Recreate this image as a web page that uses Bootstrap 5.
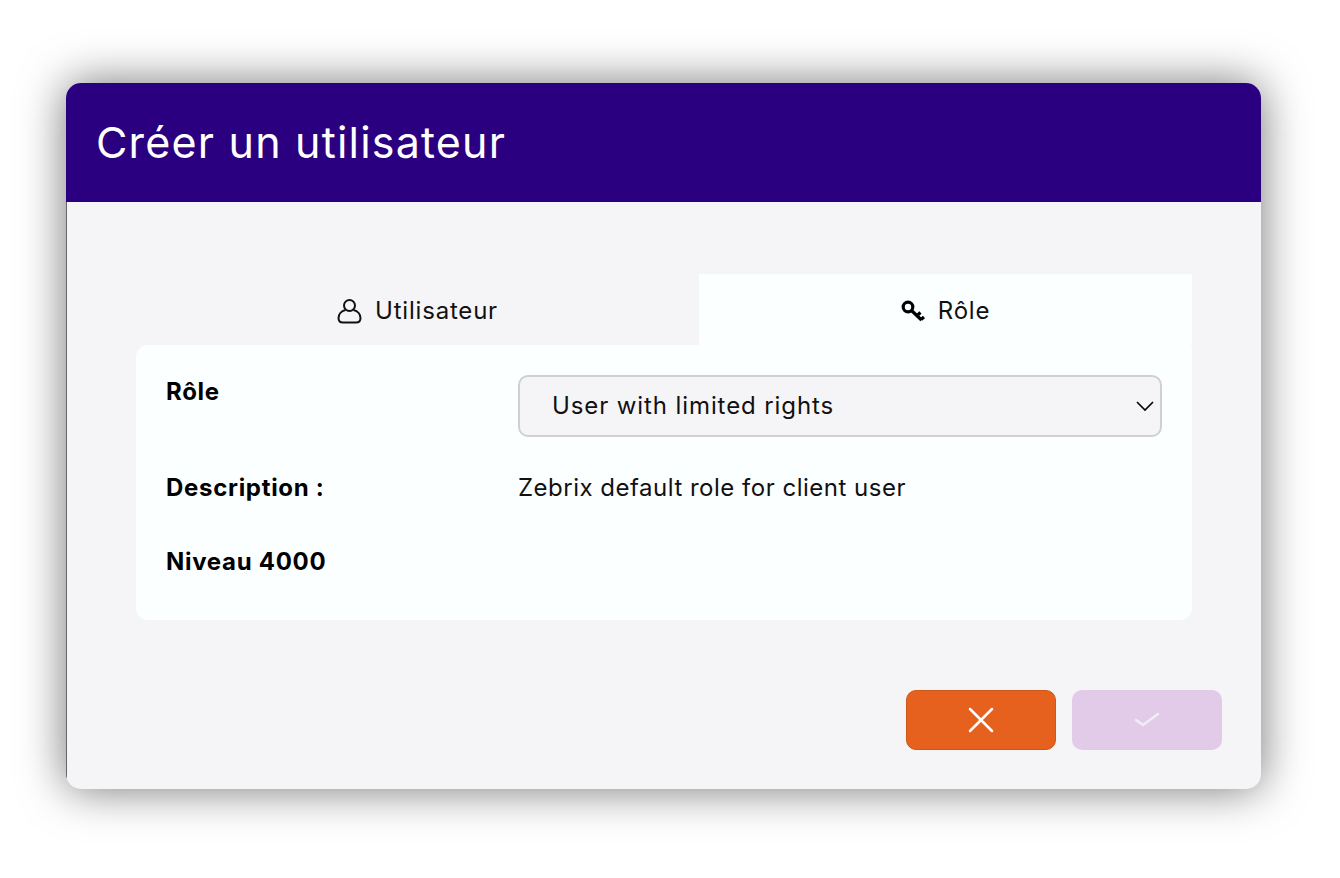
<!DOCTYPE html>
<html lang="fr">
<head>
  <meta charset="UTF-8" />
  <meta name="viewport" content="width=device-width, initial-scale=1" />
  <title>Créer un utilisateur</title>
  <link href="https://cdn.jsdelivr.net/npm/bootstrap@5.3.3/dist/css/bootstrap.min.css" rel="stylesheet" />
  <style>
    body {
      background: #fff;
      font-family: Inter, "Liberation Sans", sans-serif;
      color: #111;
    }
    .page-wrap {
      padding: 83px 79px 89px 66px;
    }
    .dialog-box {
      height: 706px;
      background: #f5f5f8;
      border: 0;
      border-radius: 15px;
      box-shadow: 0 0 46px rgba(0, 0, 0, .55);
      overflow: hidden;
    }
    .dialog-head {
      height: 119px;
      background: #2b0080;
      color: #fff;
      padding: 0 30px;
      font-size: 43px;
      font-weight: 400;
      letter-spacing: 1.2px;
    }
    .dialog-body {
      padding: 72px 69px 28px 69px;
      border-left: 1px solid #666;
    }
    .tab-item {
      height: 71px;
      padding-top: 3px;
      font-size: 24px;
      gap: 13px;
      letter-spacing: .8px;
      color: #111;
    }
    .tab-user { width: 563px; }
    .tab-role { width: 493px; background: #fbffff; }
    .role-panel {
      background: #fbffff;
      border-radius: 12px 3px 12px 12px;
      padding: 30px 30px 42px;
      font-size: 24px;
      line-height: 33px;
    }
    .label-col { width: 352px; font-weight: 700; color: #000; letter-spacing: .7px; }
    .value-col { width: 644px; letter-spacing: .5px; }
    .role-select {
      height: 62px;
      padding: 0 40px 0 32px;
      background-color: #f5f5f8;
      background-image: url("data:image/svg+xml,%3csvg xmlns='http://www.w3.org/2000/svg' viewBox='0 0 18 11'%3e%3cpath fill='none' stroke='%23000' stroke-width='1.6' d='M1 1l8 8 8-8'/%3e%3c/svg%3e");
      background-position: right 6px center;
      background-size: 18px 11px;
      border: 2px solid #d0d0d0;
      border-radius: 10px;
      font-size: 24px;
      letter-spacing: .9px;
      color: #111;
    }
    .desc-row { margin-top: 34px; }
    .level-row { margin-top: 41px; }
    .dialog-foot { padding-top: 70px; margin-right: -30px; gap: 16px; }
    .act-btn {
      width: 150px;
      height: 60px;
      border-radius: 10px;
      padding: 0;
    }
    .btn-cancel { background: #e6611e; border: 1px solid #cf5719; }
    .btn-cancel:hover { background: #d9571a; border-color: #cf5719; }
    .btn-save, .btn-save:disabled { background: #e2cbe8; border: 0; opacity: 1; }
  </style>
</head>
<body>

<div class="page-wrap">
  <div class="card dialog-box">
    <div class="dialog-head d-flex align-items-center">Créer un utilisateur</div>
    <div class="dialog-body">
      <div class="d-flex">
        <div class="tab-item tab-user d-flex align-items-center justify-content-center">
          <svg width="25" height="26" viewBox="0 0 25 26" fill="none" stroke="#111" stroke-width="2"><circle cx="12.500" cy="7.500" r="5.500"/><path d="M8.500 12 C4 13 1.500 16.500 1.500 20 C1.500 23 3.500 24.500 6 24.500 H19 C21.500 24.500 23.500 23 23.500 20 C23.500 16.500 21 13 16.500 12"/></svg>
          <span>Utilisateur</span>
        </div>
        <div class="tab-item tab-role d-flex align-items-center justify-content-center">
          <svg width="24" height="22" viewBox="0 0 24 22" fill="none" stroke="#000" stroke-width="3.200"><circle cx="7" cy="7" r="4.800"/><path d="M10.500 10.500 L20.500 20 M16 15.500 L19.500 12.500 M20 19.500 L23 17"/></svg>
          <span>Rôle</span>
        </div>
      </div>
      <div class="role-panel">
        <div class="d-flex">
          <div class="label-col">Rôle</div>
          <div class="value-col">
            <select class="form-select role-select">
              <option>User with limited rights</option>
            </select>
          </div>
        </div>
        <div class="d-flex desc-row">
          <div class="label-col">Description :</div>
          <div class="value-col">Zebrix default role for client user</div>
        </div>
        <div class="d-flex level-row">
          <div class="label-col">Niveau 4000</div>
        </div>
      </div>
      <div class="dialog-foot d-flex justify-content-end">
        <button type="button" class="btn act-btn btn-cancel d-flex align-items-center justify-content-center">
          <svg width="26" height="26" viewBox="0 0 26 26" stroke="#fff" stroke-width="2.500" stroke-linecap="round"><path d="M2 2 L24 24 M24 2 L2 24"/></svg>
        </button>
        <button type="button" class="btn act-btn btn-save d-flex align-items-center justify-content-center" disabled>
          <svg width="26" height="16" viewBox="0 0 26 16" fill="none" stroke="#f1edf6" stroke-width="2.500" stroke-linecap="round"><path d="M2 8 L9 13 L24 2"/></svg>
        </button>
      </div>
    </div>
  </div>
</div>

<script src="https://cdn.jsdelivr.net/npm/bootstrap@5.3.3/dist/js/bootstrap.bundle.min.js"></script>
</body>
</html>
